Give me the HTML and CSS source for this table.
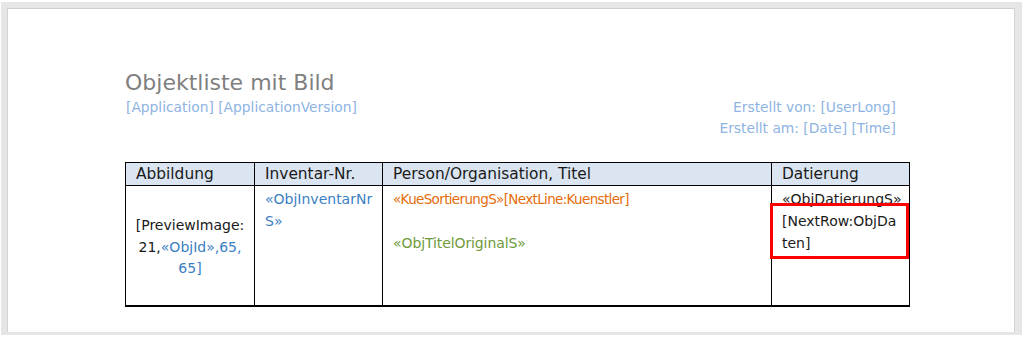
FILE: index.html
```html
<!DOCTYPE html>
<html lang="de">
<head>
<meta charset="utf-8">
<title>Objektliste mit Bild</title>
<link rel="stylesheet" href="styles.css">
</head>
<body>
<div class="frame">
  <div class="page">
    <div class="content">
      <div class="head">
        <div class="head-left">
          <div class="title">Objektliste mit Bild</div>
          <div class="meta">[Application] [ApplicationVersion]</div>
        </div>
        <div class="head-right">
          <div class="meta">Erstellt von: [UserLong]</div>
          <div class="meta">Erstellt am: [Date] [Time]</div>
        </div>
      </div>
      <table class="grid">
        <colgroup>
          <col class="c1"><col class="c2"><col class="c3"><col class="c4">
        </colgroup>
        <thead>
          <tr>
            <th>Abbildung</th>
            <th>Inventar-Nr.</th>
            <th>Person/Organisation, Titel</th>
            <th>Datierung</th>
          </tr>
        </thead>
        <tbody>
          <tr>
            <td class="img">[PreviewImage:<br>21,<span class="blue">«ObjId»,65,<br>65]</span></td>
            <td class="blue">«ObjInventarNr<br>S»</td>
            <td><div class="orange">«KueSortierungS»[NextLine:Kuenstler]</div><div class="spacer">&nbsp;</div><div class="green">«ObjTitelOriginalS»</div></td>
            <td class="dat">
              <div class="first">«ObjDatierungS»</div>
              <div class="hl">[NextRow:ObjDa<br>ten]</div>
            </td>
          </tr>
        </tbody>
      </table>
    </div>
  </div>
</div>
</body>
</html>
```

FILE: styles.css
```css
html, body {
  margin: 0;
  padding: 0;
  background: #ffffff;
}
body {
  font-family: "DejaVu Sans", "Open Sans", sans-serif;
  color: #1a1a1a;
}
.frame {
  margin: 2px 3px 2px 1px;
  border: 6px solid #e6e6e6;
  border-right-width: 7px;
  border-bottom-width: 3px;
  box-sizing: border-box;
  height: 333px;
}
.page {
  background: #fff;
  height: 100%;
  box-sizing: border-box;
  border-top: 1px solid #cfcfcf;
  border-left: 1px solid #d4d4d4;
  border-right: 1px solid #d4d4d4;
}
.content {
  padding: 60px 0 0 117px;
  width: 784px;
}
.head {
  display: flex;
  justify-content: space-between;
  align-items: flex-start;
  padding-right: 13px;
}
.title {
  font-size: 22px;
  color: #7f7f7f;
  line-height: 28px;
}
.meta {
  font-size: 13.8px;
  color: #8eb4e3;
  line-height: 21px;
}
.head-left .meta {
  margin-left: 1px;
}
.head-right {
  text-align: right;
  padding-top: 28px;
}
.grid {
  margin-top: 23px;
  border-collapse: collapse;
  width: 784px;
  table-layout: fixed;
  font-size: 14px;
  border-bottom: 2px solid #000;
}
.c1 { width: 129px; }
.c2 { width: 128px; }
.c3 { width: 389px; }
.c4 { width: 138px; }
.grid th, .grid td {
  border: 1.5px solid #000;
}
.grid th {
  background: #dbe5f1;
  font-weight: normal;
  text-align: left;
  font-size: 15.4px;
  padding: 0 4px 0 10px;
  height: 22px;
  line-height: 22px;
  white-space: nowrap;
}
.grid td {
  height: 120px;
  box-sizing: border-box;
  vertical-align: top;
  padding: 2px 4px 0 10px;
  line-height: 22px;
}
.grid td.img {
  vertical-align: middle;
  text-align: center;
  padding: 4px 2px 0 2px;
  line-height: 21.5px;
}
.blue { color: #3b7fc4; }
.orange { color: #e46c0a; font-size: 13.5px; letter-spacing: -0.65px; }
.green { color: #6f9a3b; letter-spacing: -0.1px; }
.hl {
  position: relative;
  outline: 3px solid #ff0000;
  margin: -4px -1px 0 -9.5px;
  padding: 4px 0 2px 9.5px;
}
```
